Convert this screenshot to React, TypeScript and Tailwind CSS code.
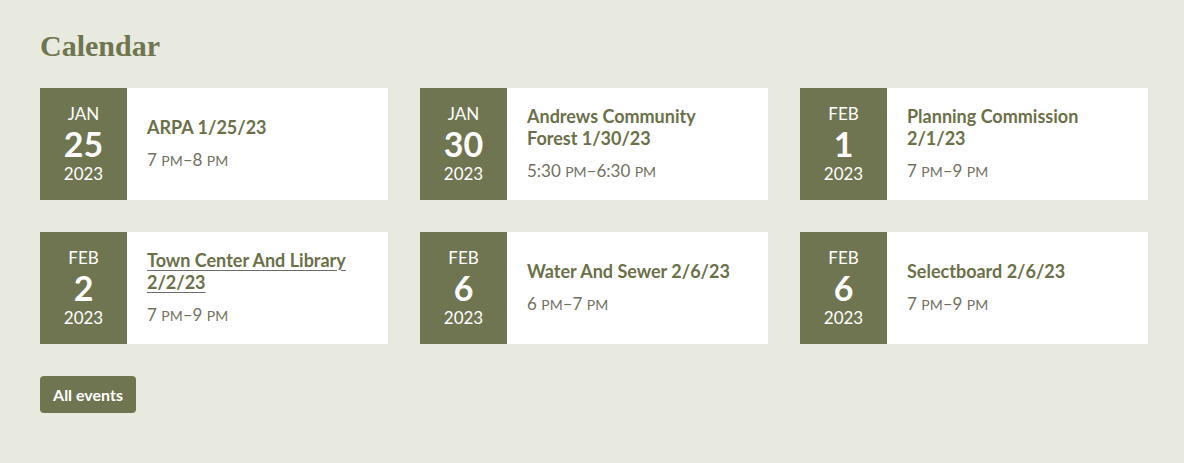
import React from "react";

type Ev = { m: string; d: string; y: string; title: string; time: [string, string, string, string]; link?: boolean };

const events: Ev[] = [
  { m: "JAN", d: "25", y: "2023", title: "ARPA 1/25/23", time: ["7", "PM", "8", "PM"] },
  { m: "JAN", d: "30", y: "2023", title: "Andrews Community Forest 1/30/23", time: ["5:30", "PM", "6:30", "PM"] },
  { m: "FEB", d: "1", y: "2023", title: "Planning Commission 2/1/23", time: ["7", "PM", "9", "PM"] },
  { m: "FEB", d: "2", y: "2023", title: "Town Center And Library 2/2/23", time: ["7", "PM", "9", "PM"], link: true },
  { m: "FEB", d: "6", y: "2023", title: "Water And Sewer 2/6/23", time: ["6", "PM", "7", "PM"] },
  { m: "FEB", d: "6", y: "2023", title: "Selectboard 2/6/23", time: ["7", "PM", "9", "PM"] },
];

function Card({ e }: { e: Ev }) {
  return (
    <div className="flex h-[112px] bg-white">
      <div className="flex w-[87px] shrink-0 flex-col items-center justify-center bg-[#6f7550] text-white">
        <div className="text-[17px] leading-[18px]">{e.m}</div>
        <div className="mt-[4px] text-[34px] font-bold leading-[34px]">{e.d}</div>
        <div className="mt-[4px] text-[17px] leading-[18px]">{e.y}</div>
      </div>
      <div className="flex flex-col justify-center pl-[20px] pr-[24px]">
        <div
          className={
            "text-[18px] font-bold leading-[22px] text-[#6b7049] " +
            (e.link ? "underline decoration-[#6b6b6b] decoration-1 underline-offset-[3px]" : "")
          }
        >
          {e.title}
        </div>
        <div className="mt-[10px] text-[17px] leading-[24px] text-[#72705f]">
          {e.time[0]} <span className="text-[14px]">{e.time[1]}</span>–{e.time[2]}{" "}
          <span className="text-[14px]">{e.time[3]}</span>
        </div>
      </div>
    </div>
  );
}

export default function App() {
  return (
    <div className="min-h-[463px] bg-[#e9eadf] px-[40px] pt-[28px] pb-[50px] font-['Lato',sans-serif]">
      <h2 className="font-['Liberation_Serif',serif] text-[30px] font-bold leading-[36px] text-[#6f7550]">
        Calendar
      </h2>
      <div className="mt-[24px] grid grid-cols-3 gap-x-[32px] gap-y-[32px] w-[1108px]">
        {events.map((e, i) => (
          <Card key={i} e={e} />
        ))}
      </div>
      <button className="mt-[32px] h-[37px] w-[96px] rounded-[4px] bg-[#6f7550] text-[16px] font-bold text-white">
        All events
      </button>
    </div>
  );
}
